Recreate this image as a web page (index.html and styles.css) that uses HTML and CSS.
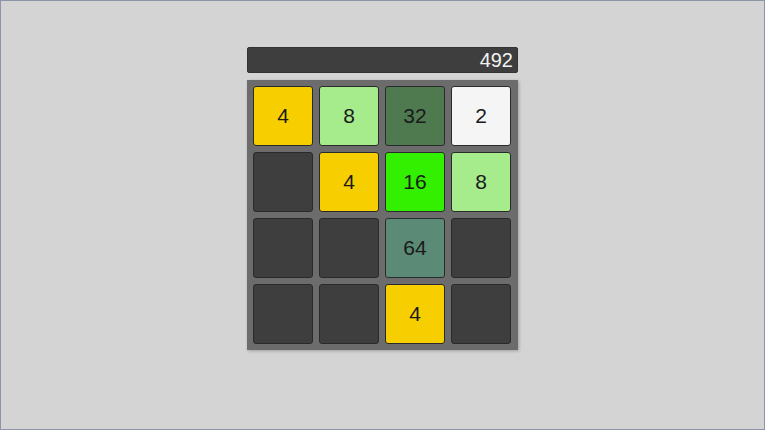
FILE: index.html
```html
<!DOCTYPE html>
<html>

<head>
    <title>2048</title>
    <link rel="stylesheet" href="styles.css">
</head>

<body>
    <section class="game">
        <div class="score">492</div>
        <div class="board">
            <div class="tile t4">4</div>
            <div class="tile t8">8</div>
            <div class="tile t32">32</div>
            <div class="tile t2">2</div>

            <div class="tile"></div>
            <div class="tile t4">4</div>
            <div class="tile t16">16</div>
            <div class="tile t8">8</div>

            <div class="tile"></div>
            <div class="tile"></div>
            <div class="tile t64">64</div>
            <div class="tile"></div>

            <div class="tile"></div>
            <div class="tile"></div>
            <div class="tile t4">4</div>
            <div class="tile"></div>
        </div>
    </section>
</body>

</html>
```
FILE: styles.css
```css
* {
    box-sizing: border-box;
}

html,
body {
    height: 100%;
    margin: 0;
}

body {
    background-color: #d4d4d4;
    border: 1px solid #8d95a8;
    font-family: "Liberation Sans", Arial, sans-serif;
    display: flex;
    justify-content: center;
    padding-top: 46px;
}

.game {
    width: 271px;
    display: flex;
    flex-direction: column;
    gap: 7px;
}

.score {
    height: 26px;
    background-color: #3e3e3e;
    border: 1px solid #333;
    border-radius: 2px;
    color: #f2f2f2;
    font-size: 20px;
    line-height: 24px;
    text-align: right;
    padding-right: 4px;
}

.board {
    display: grid;
    grid-template-columns: repeat(4, 60px);
    grid-auto-rows: 60px;
    gap: 6px;
    padding: 6px;
    background-color: #6c6c6c;
    box-shadow: 1px 1px 3px rgb(0 0 0 / 25%);
}

.tile {
    background-color: #3e3e3e;
    border: 1px solid #2a2a2a;
    border-radius: 3px;
    display: flex;
    align-items: center;
    justify-content: center;
    font-size: 21px;
    color: #1a1a1a;
}

.t2 {
    background-color: #f5f5f5;
}

.t4 {
    background-color: #f7cf00;
}

.t8 {
    background-color: #a6ec8c;
}

.t16 {
    background-color: #33ef00;
}

.t32 {
    background-color: #4f7a50;
}

.t64 {
    background-color: #5b8a76;
}
```
